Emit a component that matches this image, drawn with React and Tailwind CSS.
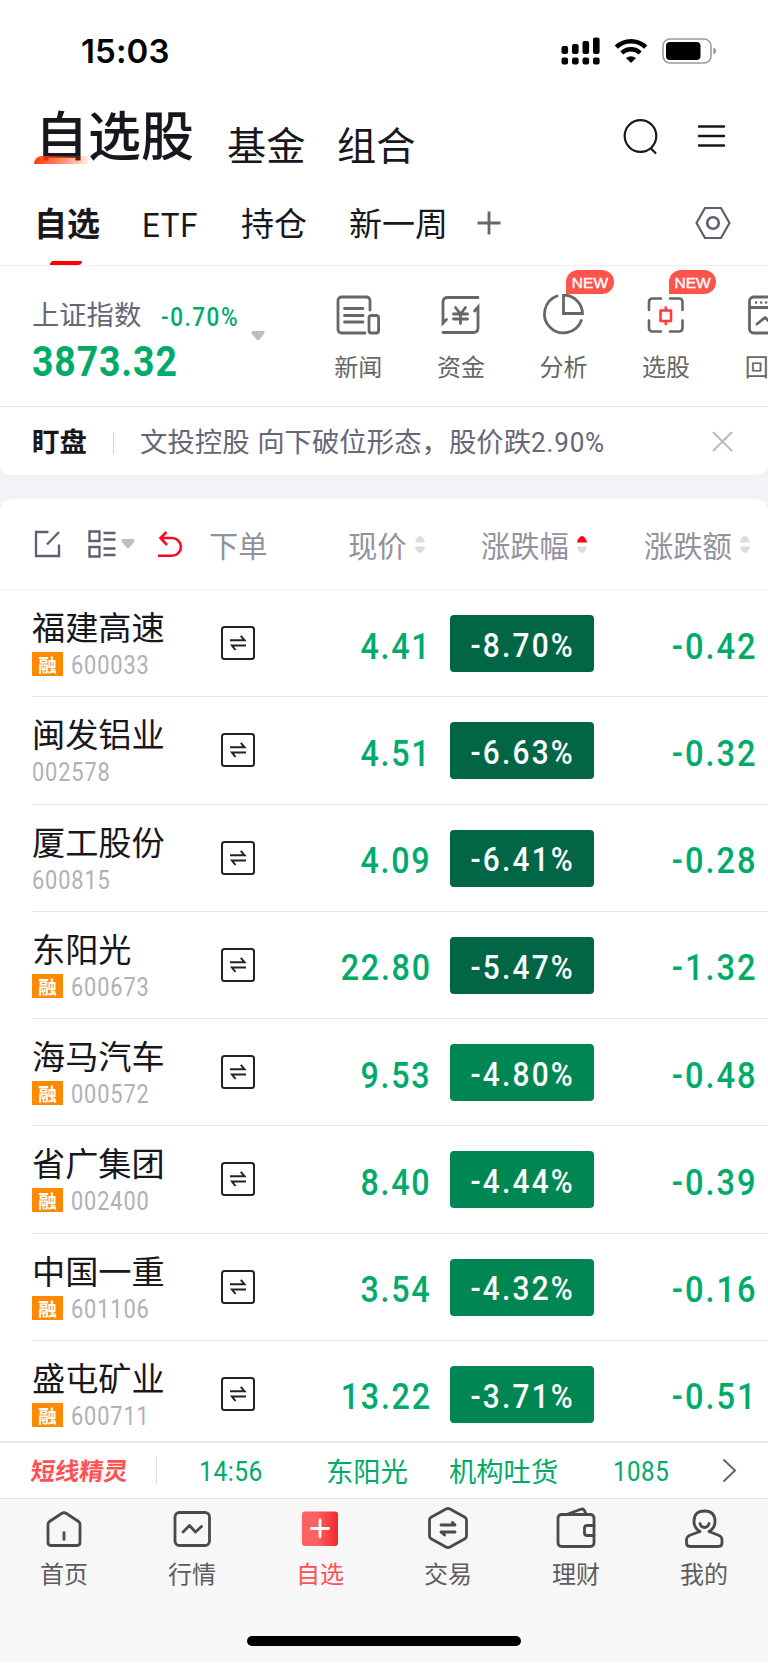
import clsx from 'clsx'

const CJK = "font-['Noto_Sans_CJK_SC',sans-serif]"

const stocks = [
    { name: '福建高速', code: '600033', margin: true, price: '4.41', pct: '-8.70%', diff: '-0.42', deep: true },
    { name: '闽发铝业', code: '002578', margin: false, price: '4.51', pct: '-6.63%', diff: '-0.32', deep: true },
    { name: '厦工股份', code: '600815', margin: false, price: '4.09', pct: '-6.41%', diff: '-0.28', deep: true },
    { name: '东阳光', code: '600673', margin: true, price: '22.80', pct: '-5.47%', diff: '-1.32', deep: true },
    { name: '海马汽车', code: '000572', margin: true, price: '9.53', pct: '-4.80%', diff: '-0.48', deep: false },
    { name: '省广集团', code: '002400', margin: true, price: '8.40', pct: '-4.44%', diff: '-0.39', deep: false },
    { name: '中国一重', code: '601106', margin: true, price: '3.54', pct: '-4.32%', diff: '-0.16', deep: false },
    { name: '盛屯矿业', code: '600711', margin: true, price: '13.22', pct: '-3.71%', diff: '-0.51', deep: false },
]

// 数字（窄体）
function Num({ className, children }) {
    return (
        <span className={clsx("inline-block font-['Roboto',sans-serif] whitespace-nowrap", className)}>
            {children}
        </span>
    )
}

function StatusBar() {
    return (
        <div className="flex h-[100px] items-center justify-between pl-[81px] pr-[51px]">
            <span className="mt-[4px] font-['Inter',sans-serif] text-[33px] font-semibold tracking-[0.1px] text-black">15:03</span>
            <div className="mt-px flex items-center gap-[14px]">
                <svg width="40" height="28" viewBox="0 0 40 28">
                    <rect x="1.500" y="9" width="6.6" height="8" rx="2" />
                    <rect x="12" y="7" width="6.6" height="10" rx="2" />
                    <rect x="22.500" y="4" width="6.6" height="13" rx="2" />
                    <rect x="33" y="0.500" width="6.600" height="16.500" rx="2" />
                    <rect x="1.500" y="20.500" width="6.6" height="7" rx="2" />
                    <rect x="12" y="20.500" width="6.6" height="7" rx="2" />
                    <rect x="22.500" y="20.500" width="6.6" height="7" rx="2" />
                    <rect x="33" y="20.500" width="6.6" height="7" rx="2" />
                </svg>
                <svg width="34" height="26" viewBox="0 0 34 26" fill="none" stroke="#000">
                    <path d="M2.300 9.200 A21 21 0 0 1 31.700 9.200" strokeWidth="4.600" />
                    <path d="M7.800 15 A13.200 13.200 0 0 1 26.200 15" strokeWidth="4.400" />
                    <path d="M17 25 L12 20 Q17 16.500 22 20 Z" fill="#000" stroke="none" />
                </svg>
                <svg width="55" height="26" viewBox="0 0 55 26">
                    <rect x="1" y="1" width="48" height="24" rx="7" fill="none" stroke="#9b9b9b" strokeWidth="1.600" />
                    <rect x="4" y="4" width="34.500" height="18" rx="4" />
                    <path d="M51.500 9.500 Q54 10.500 54 13 Q54 15.500 51.500 16.500 Z" fill="#8a8a8a" />
                </svg>
            </div>
        </div>
    )
}

function TitleBar() {
    return (
        <div className="flex h-[80px] items-end pr-[42px] pl-[34px] text-[#17171d]">
            <div className="relative h-[80px] w-[193px] text-[53px] leading-[67px] font-medium">
                <span className="pl-px">自选股</span>
                <div className="absolute top-[56px] left-0 h-2 w-[54px] rounded-tl-lg bg-linear-to-r from-[#ff3a08] via-[#ff3a08]/60 to-[#ff3a08]/10" />
            </div>
            <span className="h-[80px] w-[110px] text-[39.200px] leading-[87px]">基金</span>
            <span className="h-[80px] text-[39.200px] leading-[87px]">组合</span>
            <svg className="mb-[24px] ml-auto" width="36" height="38" viewBox="0 0 36 38" fill="none" stroke="#17171d" strokeWidth="2.200" strokeLinecap="round">
                <circle cx="18.500" cy="18" r="15.800" />
                <path d="M29 30.500 L33.500 35" />
            </svg>
            <svg className="mb-[32px] ml-[39px]" width="29" height="24" viewBox="0 0 29 24" stroke="#17171d" strokeWidth="2.400" strokeLinecap="round">
                <path d="M2 2.500 H27 M2 12 H27 M2 21.500 H27" />
            </svg>
        </div>
    )
}

function Tabs() {
    return (
        <div className="flex h-[86px] items-center border-b border-[#eeeef2] pr-[37px] pl-[34px] text-[33px] text-[#17171d]">
            <div className="relative w-[108px] font-bold">
                自选
                <div className="absolute -bottom-[18px] left-4 h-1 w-8 rounded-tl-md rounded-br-md bg-[#ff0000]" />
            </div>
            <div className="w-[99px]"><Num className="relative top-[2px] origin-left scale-x-[.92] text-[34px] tracking-[0.8px]">ETF</Num></div>
            <span className="w-[108px]">持仓</span>
            <span className="w-[128px]">新一周</span>
            <svg width="24" height="24" viewBox="0 0 24 24" stroke="#666" strokeWidth="2.800">
                <path d="M12 0.500 V23.500 M0.500 12 H23.500" />
            </svg>
            <svg className="mt-px ml-auto" width="36" height="34" viewBox="0 0 36 34" fill="none" stroke="#5d5d70" strokeWidth="2.200" strokeLinejoin="round">
                <path d="M10 2 H26 L34.500 17 L26 32 H10 L1.500 17 Z" />
                <circle cx="18" cy="17" r="5.800" strokeWidth="2.600" />
            </svg>
        </div>
    )
}

function NewsIcon() {
    return (
        <svg width="44" height="44" viewBox="0 0 44 44" fill="none" stroke="#666" strokeWidth="2.800" strokeLinecap="round">
            <path d="M34 16 V7 Q34 3 30 3 H6 Q2 3 2 7 V35 Q2 39 6 39 H29" />
            <path d="M8.500 14.500 H27 M8.500 21.500 H27 M8.500 28 H27" />
            <rect x="33" y="21.500" width="9.600" height="17.500" rx="2.500" />
        </svg>
    )
}

function FundsIcon() {
    return (
        <svg width="44" height="44" viewBox="0 0 44 44" fill="none" stroke="#666" strokeWidth="2.800" strokeLinecap="round">
            <path d="M39 3.500 H9 Q4 3.500 4 8 V29 L7.500 25.500" />
            <path d="M4 38.500 H34 Q39 38.500 39 34 V13 L35.500 17" />
            <path d="M16.500 13.500 L21.500 20 L26.500 13.500 M21.500 20 V29.500 M14.500 20 H28.500 M14.500 25 H28.500" />
        </svg>
    )
}

function PieIcon() {
    return (
        <svg width="44" height="44" viewBox="0 0 44 44" fill="none" stroke="#666" strokeWidth="2.800" strokeLinecap="round">
            <path d="M16 2 A19 19 0 1 0 40.300 26.500" />
            <path d="M22.500 1 V19.500 H41.500 A19 19 0 0 0 22.500 1 Z" />
        </svg>
    )
}

function PickIcon() {
    return (
        <svg width="44" height="44" viewBox="0 0 44 44" fill="none" stroke="#666" strokeWidth="2.600" strokeLinecap="round">
            <path d="M5 16 V8 Q5 4.500 8.500 4.500 H17 M26 4.500 H35 Q38.500 4.500 38.500 8 V16 M38.500 26.500 V34 Q38.500 37.500 35 37.500 H26 M17 37.500 H8.500 Q5 37.500 5 34 V26.500" />
            <path d="M16.500 16.500 H27 V27 H16.500 Z M21.800 13.500 V16 M21.800 27 V30" stroke="#ff3b3b" strokeLinejoin="round" />
        </svg>
    )
}

function ReplayIcon() {
    return (
        <svg width="44" height="44" viewBox="0 0 44 44" fill="none" stroke="#666" strokeWidth="2.800" strokeLinecap="round" strokeLinejoin="round">
            <rect x="2.500" y="3" width="38" height="36" rx="4" />
            <path d="M3 13.500 H40" />
            <path d="M9 8.500 H9.200 M14 8.500 H14.200 M19 8.500 H19.200" strokeWidth="2.400" />
            <path d="M10 30 L18 23.500 L24 29 L31 20" />
        </svg>
    )
}

const tools = [
    { label: '新闻', Icon: NewsIcon },
    { label: '资金', Icon: FundsIcon },
    { label: '分析', Icon: PieIcon, isNew: true },
    { label: '选股', Icon: PickIcon, isNew: true },
    { label: '回测', Icon: ReplayIcon },
]

function IndexBar() {
    return (
        <div className="flex h-[141px] overflow-hidden border-b border-[#e6e7f0]">
            <div className="w-[251px] shrink-0 pt-[27px] pl-8">
                <div className="flex h-[42px] items-center text-[27.300px] text-[#666678]">
                    <span className="w-[129px] leading-[38px] pb-0.5">上证指数</span>
                    <Num className="mt-[8px] origin-left scale-x-[.9] text-[25px] font-medium tracking-[1.700px] text-[#00ab69]">-0.70%</Num>
                </div>
                <Num className="origin-left scale-x-[.88] text-[42.500px] leading-[54px] font-bold tracking-[1px] text-[#00ab69]">3873.32</Num>
            </div>
            <svg className="mt-[65px] shrink-0" width="14" height="10" viewBox="0 0 14 10" fill="#bcbccb">
                <path d="M1.500 0 H12.500 Q14.500 1 13 3 L8.500 8.500 Q7 10 5.500 8.500 L1 3 Q-0.500 1 1.500 0 Z" />
            </svg>
            <div className="ml-[42px] flex shrink-0">
                {tools.map(({ label, Icon, isNew }) => (
                    <div key={label} className="relative flex w-[102.600px] shrink-0 flex-col items-center pt-[28px]">
                        <Icon />
                        <span className="mt-[10px] text-[24px] leading-[36px] text-[#666]">{label}</span>
                        {isNew && (
                            <span className="absolute top-1 left-[54px] flex h-6 w-[47.500px] items-center justify-center rounded-full rounded-bl-none bg-[#ff544b] pt-[2px] font-['Liberation_Sans',sans-serif] text-[15.500px] text-white [-webkit-text-stroke:0.4px_white]">
                                NEW
                            </span>
                        )}
                    </div>
                ))}
            </div>
        </div>
    )
}

function AlertBar() {
    return (
        <div className="flex h-[68px] items-center rounded-b-xl bg-white pr-[35px] pl-8 text-[27.400px]">
            <span className="w-[81px] font-bold text-[#17171d]">盯盘</span>
            <div className="mt-1 mr-[26px] h-[22px] w-px bg-[#d4d4dc]" />
            <span className="mt-0.5 text-[#666678] [word-spacing:1.5px]">文投控股 向下破位形态，股价跌<Num className="origin-left scale-x-[.93] text-[28px] tracking-[0.900px]">2.90%</Num></span>
            <svg className="ml-auto" width="21" height="21" viewBox="0 0 21 21" stroke="#b9b9c8" strokeWidth="2" strokeLinecap="round">
                <path d="M1.500 1.500 L19.500 19.500 M19.500 1.500 L1.500 19.500" />
            </svg>
        </div>
    )
}

function SortMark({ active }) {
    return (
        <svg className="-mt-[2px]" width="10" height="19" viewBox="0 0 10 19" fill="#dcdcdc">
            <path d="M0 7.500 Q0 5 2 3 Q5 -1 8 3 Q10 5 10 7.500 Z" className={active ? 'fill-[#ff0018]' : 'fill-[#dcdcdc]'} />
            <path d="M0 11.500 Q0 14 2 16 Q5 20 8 16 Q10 14 10 11.500 Z" />
        </svg>
    )
}

function TableHeader() {
    return (
        <div className="flex h-[91px] items-center rounded-t-xl border-b border-[#eeeef1] bg-white pl-[34px] text-[29.300px] text-[#92929e]">
            <svg width="27" height="28" viewBox="0 0 27 28" fill="none" stroke="#5f5f70" strokeWidth="2.300">
                <path d="M14.500 2 H2 V26 H25 V14.500 M25 2 L13 14.500" />
            </svg>
            <svg className="ml-[27px]" width="28" height="28" viewBox="0 0 28 28" fill="none" stroke="#5f5f70" strokeWidth="2.300">
                <path d="M1.500 1.500 H11.500 V11 H1.500 Z M1.500 17 H11.500 V26.500 H1.500 Z M15.500 3 H27.500 M15.500 9.500 H27.500 M15.500 18.500 H27.500 M15.500 25 H27.500" />
            </svg>
            <svg className="ml-[5px]" width="14" height="10" viewBox="0 0 14 10" fill="#bcbccb">
                <path d="M1.500 0 H12.500 Q14.500 1 13 3 L8.500 8.500 Q7 10 5.500 8.500 L1 3 Q-0.500 1 1.500 0 Z" />
            </svg>
            <svg className="ml-[23px]" width="26" height="27" viewBox="0 0 26 27" fill="none" stroke="#ff0826" strokeWidth="2.600">
                <path d="M8.500 1 L2.500 7 L9 14 M3 7 H14 A8.900 8.900 0 0 1 14 24.800 H0" />
            </svg>
            <span className="mt-[2px] ml-[25px] w-[139px]">下单</span>
            <div className="mt-[2px] flex w-[133px] items-center gap-2">现价<SortMark /></div>
            <div className="mt-[2px] flex w-[163px] items-center gap-2">涨跌幅<SortMark active /></div>
            <div className="mt-[2px] flex items-center gap-2">涨跌额<SortMark /></div>
        </div>
    )
}

function StockRow({ stock }) {
    const { name, code, margin, price, pct, diff, deep } = stock
    return (
        <div className="ml-8 flex h-[107.250px] shrink-0 border-b border-[#e9e9f0]">
            <div className="w-[189px] pt-[16px]">
                <p className="text-[33.200px] leading-[40px] text-[#17171d]">{name}</p>
                <div className="mt-[6px] flex h-6 items-center">
                    {margin && (
                        <span className="mr-[8px] flex h-6 w-[31px] items-center justify-center bg-[#ff8a00] text-[18.500px] leading-6 font-bold text-white">融</span>
                    )}
                    <Num className="mt-[4px] origin-left scale-x-[.87] text-[25px] leading-6 tracking-[1px] text-[#b0b0b6]">{code}</Num>
                </div>
            </div>
            <svg className="mt-[36px]" width="34" height="34" viewBox="0 0 34 34" fill="none" stroke="#222" strokeWidth="2">
                <rect x="1" y="1" width="32" height="32" rx="2.500" />
                <path d="M9 14.200 H23.500 L19.800 9.800 M25 19.600 H11 L14.500 24" />
            </svg>
            <div className="w-[175px] pt-[30.500px] text-right">
                <Num className="-mr-[1.500px] origin-right scale-x-[.86] text-[37.500px] leading-[50px] font-medium tracking-[2px] text-[#00ab69]">{price}</Num>
            </div>
            <div className={clsx('mt-[25px] ml-[20px] flex h-[57px] w-[144px] items-center justify-center rounded', deep ? 'bg-[#006645]' : 'bg-[#008653]')}>
                <Num className="mt-[5px] ml-0.5 scale-x-[.89] text-[33.500px] font-medium tracking-[2.500px] text-white">{pct}</Num>
            </div>
            <div className="w-[162px] pt-[30.500px] text-right">
                <Num className="-mr-[2px] origin-right scale-x-[.87] text-[37.500px] leading-[50px] font-medium tracking-[2.300px] text-[#00ab69]">{diff}</Num>
            </div>
        </div>
    )
}

function Ticker() {
    return (
        <div className="flex h-[57px] shrink-0 items-center border-t-2 border-[#e8e9f0] bg-white pl-[31px] text-[27.300px] text-[#00ab69]">
            <span className="w-[125px] -skew-x-6 text-[24.300px] font-bold text-[#ff5053]">短线精灵</span>
            <div className="h-[27px] w-px bg-[#dcdce4]" />
            <Num className="mt-0.5 ml-[42px] w-[127px] origin-left scale-x-[.88] text-[28px] tracking-[0.600px]">14:56</Num>
            <span className="w-[123px]">东阳光</span>
            <span className="w-[164px]">机构吐货</span>
            <Num className="mt-0.5 origin-left scale-x-[.86] text-[28px] tracking-[0.600px]">1085</Num>
            <svg className="mr-[31px] ml-auto" width="15" height="25" viewBox="0 0 15 25" fill="none" stroke="#666" strokeWidth="2">
                <path d="M1.500 1.500 L13 12.500 L1.500 23.500" />
            </svg>
        </div>
    )
}

const navItems = [
    {
        label: '首页',
        icon: (
            <>
                <path d="M6 17.500 Q6 15.500 7.500 14.500 L19.500 6.500 Q22 5 24.500 6.500 L36.500 14.500 Q38 15.500 38 17.500 V35.500 Q38 38.500 35 38.500 H9 Q6 38.500 6 35.500 Z" />
                <path d="M22 24.500 V33.500" strokeLinecap="butt" />
            </>
        ),
    },
    {
        label: '行情',
        icon: (
            <>
                <rect x="5" y="5.500" width="34.500" height="33" rx="4.500" />
                <path d="M13 25 L19.500 18.500 L25.500 25 L31.500 19.500" />
            </>
        ),
    },
    {
        label: '自选',
        active: true,
        icon: (
            <>
                <defs>
                    <linearGradient id="navRed" x1="0" x2="1">
                        <stop offset="0.400" stopColor="#ff6064" />
                        <stop offset="1" stopColor="#ee2a2c" />
                    </linearGradient>
                </defs>
                <rect x="4" y="4.500" width="36" height="34.500" rx="3" fill="url(#navRed)" stroke="none" />
                <path d="M22 13 V30 M13.500 21.500 H30.500" stroke="#fff" />
            </>
        ),
    },
    {
        label: '交易',
        icon: (
            <>
                <path d="M20 2 Q22 1 24 2 L38.500 10 Q40.500 11 40.500 13.500 V28.500 Q40.500 31 38.500 32 L24 40 Q22 41.200 20 40 L5.500 32 Q3.500 31 3.500 28.500 V13.500 Q3.500 11 5.500 10 Z" />
                <path d="M15 18 H29 L26.500 15.500 M29 25 H15 L18.500 28" />
            </>
        ),
    },
    {
        label: '理财',
        icon: (
            <>
                <rect x="4" y="7.500" width="36" height="32" rx="3.500" />
                <path d="M14 7 L27.500 2 Q30 1.500 31.500 6" />
                <path d="M40 18.500 H33 Q30.500 18.500 30.500 21 V26 Q30.500 28.500 33 28.500 H40" />
            </>
        ),
    },
    {
        label: '我的',
        icon: (
            <>
                <path d="M18 24.500 Q12 21 12 14.500 Q12 4 22.500 4 Q33 4 33 14.500 Q33 21 27 24.500 L36 28 Q40 29.500 40 33 V36 Q40 39.500 36.500 39.500 H8 Q4.500 39.500 4.500 36 V33 Q4.500 29.500 8.500 28 L18 24.500" />
                <path d="M18 16.500 Q19 20.500 22.500 20.500 Q26 20.500 27 16.500" />
            </>
        ),
    },
]

function BottomNav() {
    return (
        <div className="flex h-[164px] shrink-0 flex-col border-t border-[#e6e6e9] bg-[#f7f7f8]">
            <div className="flex pt-[8px]">
                {navItems.map(({ label, icon, active }) => (
                    <div key={label} className="flex flex-1 flex-col items-center">
                        <svg width="44" height="44" viewBox="0 0 44 44" fill="none" stroke="#4a4a4a" strokeWidth="2.800" strokeLinecap="round" strokeLinejoin="round">
                            {icon}
                        </svg>
                        <span className={clsx('mt-[4px] text-[24px] leading-9', active ? 'text-[#ff5053]' : 'text-[#5c5c5c]')}>{label}</span>
                    </div>
                ))}
            </div>
            <div className="mt-[45px] h-[10px] w-[274px] self-center rounded-full bg-black" />
        </div>
    )
}

export default function App() {
    return (
        <div className={clsx('flex h-[1663px] w-[768px] flex-col overflow-hidden bg-white', CJK)}>
            <StatusBar />
            <TitleBar />
            <Tabs />
            <div className="bg-[#f2f3f9] pb-6">
                <div className="overflow-hidden rounded-b-xl bg-white">
                    <IndexBar />
                    <AlertBar />
                </div>
            </div>
            <div className="bg-[#f2f3f9]">
                <TableHeader />
            </div>
            <div className="flex h-[851px] shrink-0 flex-col overflow-hidden">
                {stocks.map((stock) => (
                    <StockRow key={stock.code} stock={stock} />
                ))}
            </div>
            <Ticker />
            <BottomNav />
        </div>
    )
}
